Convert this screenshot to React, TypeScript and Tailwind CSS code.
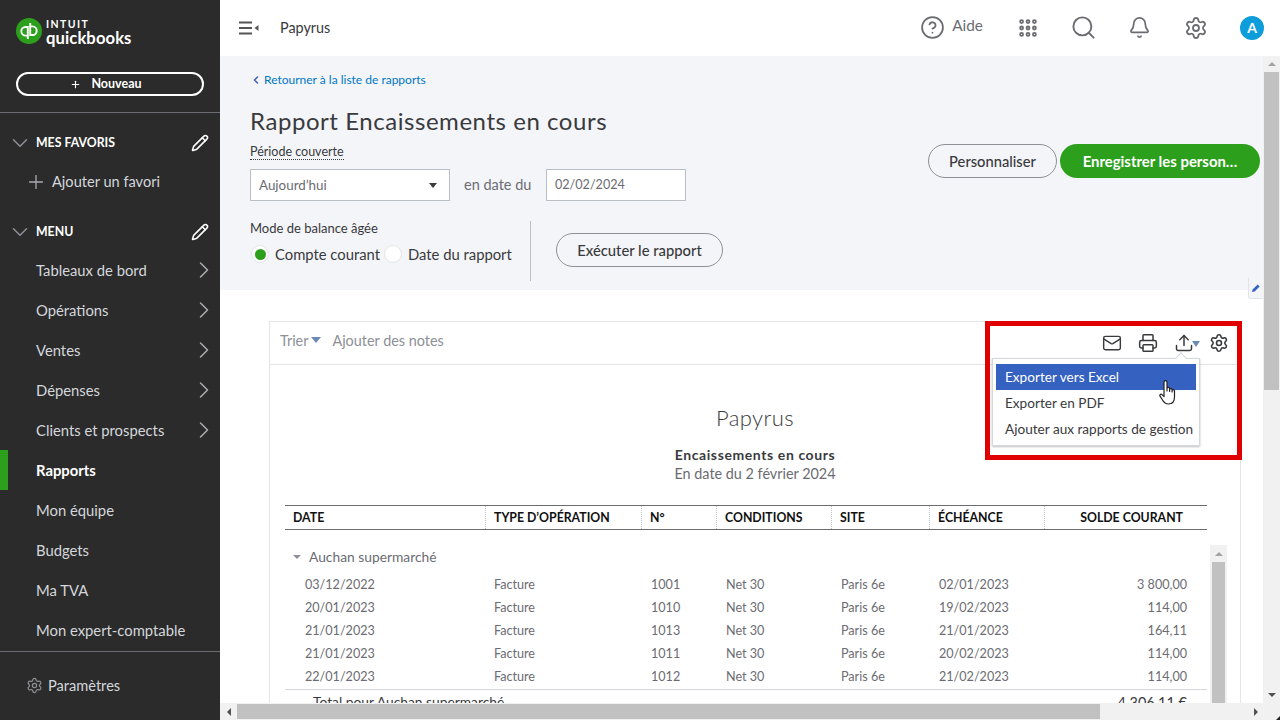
import React from 'react';
import {
  Bell,
  ChevronDown,
  ChevronLeft,
  ChevronRight,
  CircleHelp,
  Grip,
  Mail,
  Pencil,
  Plus,
  Printer,
  Search,
  Settings,
  Upload,
} from 'lucide-react';

const menuItems = [
  { label: 'Tableaux de bord', arrow: true },
  { label: 'Opérations', arrow: true },
  { label: 'Ventes', arrow: true },
  { label: 'Dépenses', arrow: true },
  { label: 'Clients et prospects', arrow: true },
  { label: 'Rapports', active: true },
  { label: 'Mon équipe' },
  { label: 'Budgets' },
  { label: 'Ma TVA' },
  { label: 'Mon expert-comptable' },
];

const columns = 'grid grid-cols-[200px_156px_75px_115px_98px_115px_163px]';

const headers = ['DATE', 'TYPE D’OPÉRATION', 'N°', 'CONDITIONS', 'SITE', 'ÉCHÉANCE', 'SOLDE COURANT'];

const rows = [
  ['03/12/2022', 'Facture', '1001', 'Net 30', 'Paris 6e', '02/01/2023', '3 800,00'],
  ['20/01/2023', 'Facture', '1010', 'Net 30', 'Paris 6e', '19/02/2023', '114,00'],
  ['21/01/2023', 'Facture', '1013', 'Net 30', 'Paris 6e', '21/01/2023', '164,11'],
  ['21/01/2023', 'Facture', '1011', 'Net 30', 'Paris 6e', '20/02/2023', '114,00'],
  ['22/01/2023', 'Facture', '1012', 'Net 30', 'Paris 6e', '21/02/2023', '114,00'],
];

const Logo: React.FC = () => (
  <div className="flex items-center h-[26px] ml-4">
    <svg width="26" height="26" viewBox="0 0 26 26" className="shrink-0">
      <circle cx="13" cy="13" r="13" fill="#2ca01c" />
      <g fill="none" stroke="#fff" strokeWidth="1.9">
        <path d="M11.8 17.6H9.6a4.3 4.3 0 0 1 0-8.6h2.2V21" />
        <path d="M14.2 8.4h2.2a4.3 4.3 0 0 1 0 8.6h-2.2V5" />
      </g>
    </svg>
    <div className="ml-[4px] text-white">
      <div className="text-[10.5px] font-bold tracking-[1.4px] leading-[12px] mt-[2px]">INTUIT</div>
      <div className="text-[16.6px] font-bold leading-[16px] tracking-[0.1px]">quickbooks</div>
    </div>
  </div>
);

const SectionTitle: React.FC<{ label: string; className: string }> = ({ label, className }) => (
  <div className={`h-[22px] flex items-center pl-[7px] text-white text-[12.3px] font-bold ${className}`}>
    <ChevronDown size={26} strokeWidth={1.4} className="text-[#8d9096]" />
    <span className="ml-[3px] flex-1">{label}</span>
    <Pencil size={18} strokeWidth={2} className="mr-[11px]" />
  </div>
);

const Sidebar: React.FC = () => (
  <aside className="w-[220px] h-full shrink-0 bg-[#2b2b2b] flex flex-col">
    <div className="pt-[18px]">
      <Logo />
    </div>
    <div className="mx-4 mt-7 h-6 rounded-full border-2 border-white flex items-center justify-center gap-[10px] pr-2 text-white text-[12.5px] font-bold">
      <Plus size={11} strokeWidth={2.5} />
      <span>Nouveau</span>
    </div>
    <div className="mt-4 h-px bg-[#6b6c72]" />
    <SectionTitle label="MES FAVORIS" className="mt-[19px]" />
    <div className="mt-[8px] h-10 flex items-center pl-[25px] text-[#d4d7dc] text-[14.6px]">
      <Plus size={22} strokeWidth={1.4} className="text-[#a9abb0]" />
      <span className="ml-[5px]">Ajouter un favori</span>
    </div>
    <SectionTitle label="MENU" className="mt-[19px]" />
    <nav className="mt-[7px]">
      {menuItems.map((item) => (
        <div
          key={item.label}
          className={`h-10 flex items-center pr-[2px] text-[14.8px] ${
            item.active ? 'text-white font-bold border-l-8 border-[#2ca01c] pl-7' : 'text-[#d4d7dc] pl-9'
          }`}
        >
          <span className="flex-1">{item.label}</span>
          {item.arrow && <ChevronRight size={28} strokeWidth={1.3} className="text-[#a9abb0]" />}
        </div>
      ))}
    </nav>
    <div className="mt-px h-px bg-[#6b6c72]" />
    <div className="mt-[23px] flex items-center pl-[26px] text-[#d4d7dc] text-[14.6px]">
      <Settings size={17} strokeWidth={1.7} className="text-[#8d9096]" />
      <span className="ml-[5px]">Paramètres</span>
    </div>
  </aside>
);

const TopBar: React.FC = () => (
  <header className="h-14 shrink-0 bg-white flex items-center text-[#6b6c72]">
    <svg width="20" height="14" viewBox="0 0 20 14" className="ml-[19px]" fill="none" stroke="#555" strokeWidth="1.8">
      <path d="M0 1.5h13M0 7h13M0 12.5h13" />
      <path d="M19.5 4v6l-4-3z" fill="#555" stroke="none" />
    </svg>
    <span className="ml-[21px] text-[14.4px] text-[#393a3d]">Papyrus</span>
    <div className="ml-auto flex items-center">
      <CircleHelp size={25} strokeWidth={1.7} />
      <span className="ml-[7px] mb-[4px] text-[15.4px]">Aide</span>
      <Grip size={22} strokeWidth={3.2} className="ml-[34px]" />
      <Search size={27} strokeWidth={1.7} className="ml-[31px]" />
      <Bell size={23} strokeWidth={1.8} className="ml-[31px]" />
      <Settings size={24} strokeWidth={1.8} className="ml-[33px]" />
      <div className="ml-[32px] mr-4 w-6 h-6 rounded-full bg-[#0d9ddb] text-white text-[14px] font-bold flex items-center justify-center">
        A
      </div>
    </div>
  </header>
);

const FilterPanel: React.FC = () => (
  <section className="relative h-[234px] bg-[#f4f5f8] pl-[30px] text-[#393a3d]">
    <div className="h-[48px] flex items-center text-[12px] text-[#0077c5]">
      <ChevronLeft size={12} strokeWidth={3} className="text-[#3d5fb0]" />
      <span className="ml-[2px]">Retourner à la liste de rapports</span>
    </div>
    <h1 className="mt-0 text-[24px] leading-[34px] tracking-[0.55px]">Rapport Encaissements en cours</h1>
    <div className="mt-[7px] w-fit text-[12.5px] leading-[14px] border-b border-dotted border-[#393a3d]">Période couverte</div>
    <div className="mt-[9px] flex items-center">
      <div className="w-[200px] h-8 bg-white border border-[#babec5] flex items-center justify-between pl-2 pr-[12px] text-[13.4px] text-[#6b6c72]">
        <span>Aujourd’hui</span>
        <span className="w-0 h-0 border-x-[4px] border-x-transparent border-t-[5px] border-t-[#393a3d]" />
      </div>
      <span className="ml-[14px] w-[82px] text-[14.5px] text-[#6b6c72] pb-[1px]">en date du</span>
      <div className="w-[140px] h-8 bg-white border border-[#babec5] flex items-center pl-2 text-[12.6px] text-[#6b6c72]">02/02/2024</div>
    </div>
    <div className="mt-[20px] flex">
      <div className="w-[281px] border-r border-[#babec5] h-[60px]">
        <div className="text-[13px] leading-[16px] mt-[-1px]">Mode de balance âgée</div>
        <div className="mt-[7px] flex items-center text-[14.8px]">
          <span className="w-[18px] h-[18px] rounded-full bg-white border border-[#e3e5e8] flex items-center justify-center ml-[1px]">
            <span className="w-[11px] h-[11px] rounded-full bg-[#2ca01c]" />
          </span>
          <span className="ml-[6px]">Compte courant</span>
          <span className="ml-[4px] w-[18px] h-[18px] rounded-full bg-white border border-[#e3e5e8]" />
          <span className="ml-[6px]">Date du rapport</span>
        </div>
      </div>
      <div className="ml-[25px] mt-[12px] w-[167px] h-[34px] rounded-full border border-[#8d9096] flex items-center justify-center text-[14.8px] font-medium">
        Exécuter le rapport
      </div>
    </div>
    <div className="absolute right-[3px] top-[88px] flex gap-[3px]">
      <div className="w-[129px] h-[34px] rounded-full border border-[#8d9096] flex items-center justify-center text-[14.7px] font-medium">
        Personnaliser
      </div>
      <div className="w-[200px] h-[34px] rounded-full bg-[#2ca01c] text-white flex items-center justify-center text-[14.9px] font-bold">
        Enregistrer les person…
      </div>
    </div>
  </section>
);

const ReportTable: React.FC = () => (
  <div className="relative ml-[15px] w-[922px] mt-[22px]">
    <div className={`${columns} h-[25px] border-y border-[#6b6c72] text-[12.3px] font-bold text-[#111] items-center`}>
      {headers.map((h, i) => (
        <div
          key={h}
          className={`h-full flex items-center px-2 pt-px ${i > 0 ? 'border-l border-dotted border-[#babec5]' : ''} ${
            i === 6 ? 'justify-end pr-6' : ''
          }`}
        >
          {h}
        </div>
      ))}
    </div>
    <div className="mt-[17px] flex items-center h-[20px] text-[13.8px] text-[#6b6c72]">
      <span className="ml-2 w-0 h-0 border-x-[4px] border-x-transparent border-t-[4px] border-t-[#8d9096]" />
      <span className="ml-2">Auchan supermarché</span>
    </div>
    <div className="mt-[7px]">
      {rows.map((row) => (
        <div key={row[0] + row[2]} className={`${columns} h-[23px] items-center text-[12.6px] text-[#6b6c72]`}>
          {row.map((cell, i) => (
            <div key={i} className={i === 0 ? 'pl-5' : i === 6 ? 'text-right pr-5' : i === 1 ? 'pl-[9px]' : 'pl-[10px]'}>
              {cell}
            </div>
          ))}
        </div>
      ))}
    </div>
    <div className="border-t border-[#d4d7dc] flex justify-between h-[26px] items-center text-[13.8px] text-[#393a3d] pl-7 pr-5">
      <span>Total pour Auchan supermarché</span>
      <span className="text-[14.5px]">4 306,11 €</span>
    </div>
  </div>
);

const ReportCard: React.FC = () => (
  <div className="relative ml-[49px] mt-[31px] w-[972px] h-[500px] bg-white border border-[#e3e5e8]">
    <div className="h-[43px] border-b border-[#e3e5e8] flex items-center pl-[10px] pb-[5px] text-[14.4px] text-[#8d9096] gap-[11px]">
      <span className="flex items-center gap-[3px]">
        Trier
        <span className="w-0 h-0 border-x-[5px] border-x-transparent border-t-[6px] border-t-[#6b8bb5]" />
      </span>
      <span>Ajouter des notes</span>
    </div>
    <div className="mt-[39px] text-center text-[22px] leading-[28px] font-light text-[#393a3d] tracking-[0.4px]">Papyrus</div>
    <div className="mt-[13px] text-center text-[14px] leading-[19px] font-bold tracking-[0.6px] text-[#393a3d]">Encaissements en cours</div>
    <div className="text-center text-[14.4px] leading-[19px] text-[#6b6c72]">En date du 2 février 2024</div>
    <ReportTable />
    <div className="absolute left-[940px] top-[223px] w-[17px] h-[300px] bg-[#f1f1f1]">
      <div className="h-[17px] flex items-center justify-center">
        <span className="w-0 h-0 border-x-[4px] border-x-transparent border-b-[4px] border-b-[#a3a3a3]" />
      </div>
      <div className="mx-[2px] h-[280px] bg-[#c1c1c1]" />
    </div>
  </div>
);

const HandCursor: React.FC = () => (
  <svg width="18" height="25" viewBox="0 0 18 25" className="absolute left-[169px] top-[54px]" fill="#fff" stroke="#222" strokeWidth="1.2" strokeLinejoin="round">
    <path d="M5 15V2.2a1.5 1.5 0 0 1 3 0V11V8.6a1.3 1.3 0 0 1 2.6 0V11.5V9.6a1.3 1.3 0 0 1 2.5 0V12V10.8a1.2 1.2 0 0 1 2.4 0V17c0 4.4-2.2 7-6 7c-3 0-4.5-1.4-6-4L1 16.2c-.7-1.3 1-2.6 2-1.6L5 16.6z" />
  </svg>
);

const ExportMenu: React.FC = () => (
  <div className="absolute left-[765px] top-[265px] w-[257px] h-[139px] border-[5px] border-[#e00000] text-[#393a3d]">
    <Mail size={20} strokeWidth={1.7} className="absolute left-[112px] top-[7px]" />
    <Printer size={20} strokeWidth={1.8} className="absolute left-[148px] top-[7px]" />
    <Upload size={20} strokeWidth={1.8} className="absolute left-[184px] top-[7px]" />
    <span className="absolute left-[202px] top-[15px] w-0 h-0 border-x-[4.5px] border-x-transparent border-t-[6px] border-t-[#6b8bb5]" />
    <Settings size={20} strokeWidth={1.9} className="absolute left-[219px] top-[7px]" />
    <div className="absolute left-[2px] top-[32px] w-[208px] h-[88px] bg-white border border-[#d4d7dc] shadow-[0_1px_2px_rgba(0,0,0,0.25)] py-[5px] px-[3px] text-[13.6px] text-[#393a3d]">
      <span className="absolute left-[184px] top-[-5px] w-[8px] h-[8px] rotate-45 bg-white border-l border-t border-[#d4d7dc]" />
      <div className="relative h-[26px] bg-[#3561c0] text-white flex items-center pl-[9px]">Exporter vers Excel</div>
      <div className="h-[26px] flex items-center pl-[9px]">Exporter en PDF</div>
      <div className="h-[26px] flex items-center pl-[9px] whitespace-nowrap">Ajouter aux rapports de gestion</div>
    </div>
    <HandCursor />
  </div>
);

const VerticalScrollbar: React.FC = () => (
  <div className="w-[17px] shrink-0 bg-[#f1f1f1] flex flex-col">
    <div className="h-[16px] flex items-center justify-center">
      <span className="w-0 h-0 border-x-[4px] border-x-transparent border-b-[4px] border-b-[#a3a3a3]" />
    </div>
    <div className="mx-[1px] h-[318px] bg-[#c1c1c1]" />
    <div className="mt-auto h-[17px] flex items-center justify-center">
      <span className="w-0 h-0 border-x-[4px] border-x-transparent border-t-[4px] border-t-[#505050]" />
    </div>
  </div>
);

const HorizontalScrollbar: React.FC = () => (
  <div className="relative h-[17px] shrink-0 bg-[#f1f1f1] flex items-center">
    <div className="w-[17px] flex items-center justify-center">
      <span className="w-0 h-0 border-y-[4px] border-y-transparent border-r-[4px] border-r-[#505050]" />
    </div>
    <div className="h-[15px] w-[863px] bg-[#c1c1c1]" />
    <div className="ml-auto w-[26px] flex items-center">
      <span className="w-0 h-0 border-y-[4px] border-y-transparent border-l-[4px] border-l-[#505050]" />
    </div>
    <span className="absolute right-0 bottom-0 w-0 h-0 border-l-[4px] border-l-transparent border-b-[4px] border-b-[#222]" />
  </div>
);

export default function App() {
  return (
    <div className="w-[1280px] h-[720px] flex overflow-hidden bg-white font-['Lato',sans-serif]">
      <Sidebar />
      <main className="flex-1 min-w-0 flex flex-col">
        <TopBar />
        <div className="flex-1 min-h-0 flex">
          <div className="relative flex-1 min-w-0 overflow-hidden">
            <FilterPanel />
            <ReportCard />
            <ExportMenu />
            <div className="absolute right-0 top-[222px] w-[15px] h-[21px] bg-[#f4f5f8] border-l border-b border-[#e3e5e8] rounded-bl-[3px] flex items-center justify-center">
              <svg width="10" height="10" viewBox="0 0 10 10">
                <path d="M1 9l.6-2.6L6.6 1.4l2 2-5 5z" fill="#3561c0" />
              </svg>
            </div>
          </div>
          <VerticalScrollbar />
        </div>
        <HorizontalScrollbar />
      </main>
    </div>
  );
}
